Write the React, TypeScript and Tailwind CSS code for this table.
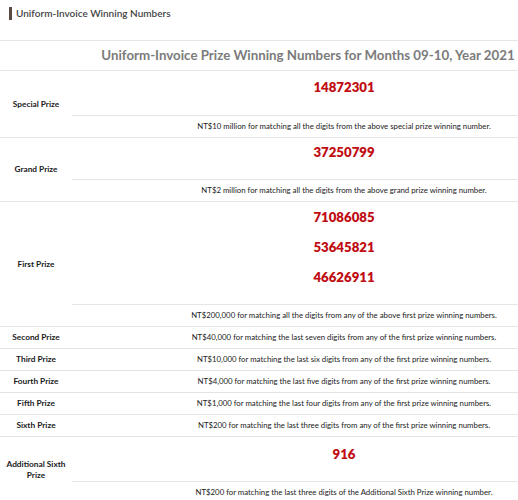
import React from 'react'

interface Prize {
  label: string
  numbers?: string[]
  rowH?: number
  padTop?: number
  desc: string
}

const PRIZES: Prize[] = [
  {
    label: 'Special Prize',
    numbers: ['14872301'],
    rowH: 44,
    padTop: 2,
    desc: 'NT$10 million for matching all the digits from the above special prize winning number.',
  },
  {
    label: 'Grand Prize',
    numbers: ['37250799'],
    rowH: 41,
    padTop: 0,
    desc: 'NT$2 million for matching all the digits from the above grand prize winning number.',
  },
  {
    label: 'First Prize',
    numbers: ['71086085', '53645821', '46626911'],
    rowH: 102,
    padTop: 1,
    desc: 'NT$200,000 for matching all the digits from any of the above first prize winning numbers.',
  },
  { label: 'Second Prize', desc: 'NT$40,000 for matching the last seven digits from any of the first prize winning numbers.' },
  { label: 'Third Prize', desc: 'NT$10,000 for matching the last six digits from any of the first prize winning numbers.' },
  { label: 'Fourth Prize', desc: 'NT$4,000 for matching the last five digits from any of the first prize winning numbers.' },
  { label: 'Fifth Prize', desc: 'NT$1,000 for matching the last four digits from any of the first prize winning numbers.' },
  { label: 'Sixth Prize', desc: 'NT$200 for matching the last three digits from any of the first prize winning numbers.' },
  {
    label: 'Additional Sixth Prize',
    numbers: ['916'],
    rowH: 44,
    padTop: 3,
    desc: 'NT$200 for matching the last three digits of the Additional Sixth Prize winning number.',
  },
]

export default function App() {
  return (
    <div className="w-[518px] h-[500px] overflow-hidden bg-white font-['Lato','Noto_Sans',sans-serif]">
      {/* Page heading */}
      <div className="h-[40px] pl-[9px] pt-[7px]">
        <div className="flex items-center gap-[4px]">
          <span className="inline-block w-[3px] h-[13px] bg-[#5b4a44]" />
          <span className="text-[10px] font-semibold text-[#444] leading-[13px]">Uniform-Invoice Winning Numbers</span>
        </div>
      </div>

      {/* table is wider than the viewport, right side is cut like the original */}
      <table className="w-[616px] border-collapse table-fixed">
        <colgroup>
          <col className="w-[72px]" />
          <col />
        </colgroup>
        <tbody>
          <tr>
            <td colSpan={2} className="h-[30px] border-t border-b border-[#e6e6e6] text-center text-[13.3px] font-bold text-[#7b7b7b]">
              Uniform-Invoice Prize Winning Numbers for Months 09-10, Year 2021
            </td>
          </tr>
          {PRIZES.map(p =>
            p.numbers ? (
              <React.Fragment key={p.label}>
                <tr>
                  <td rowSpan={2} className="border-b border-[#e3e3e3] px-[4px] text-center text-[8.3px] font-bold leading-[11px] text-[#1a1a1a]">
                    {p.label}
                  </td>
                  <td className="border-b border-[#e6e6e6] p-0 align-top">
                    <div className="flex flex-col" style={{ height: p.rowH, paddingTop: p.padTop }}>
                      {p.numbers.map(n => (
                        <div key={n} className="h-[30px] flex items-center justify-center text-[13.2px] font-extrabold text-[#c00d12]">
                          {n}
                        </div>
                      ))}
                    </div>
                  </td>
                </tr>
                <tr>
                  <td className="h-[22px] border-b border-[#e3e3e3] text-center text-[7.8px] text-[#222]">{p.desc}</td>
                </tr>
              </React.Fragment>
            ) : (
              <tr key={p.label}>
                <td className="h-[22px] border-b border-[#e3e3e3] text-center text-[8.3px] font-bold text-[#1a1a1a]">{p.label}</td>
                <td className="h-[22px] border-b border-[#e3e3e3] text-center text-[7.8px] text-[#222]">{p.desc}</td>
              </tr>
            )
          )}
        </tbody>
      </table>
    </div>
  )
}
